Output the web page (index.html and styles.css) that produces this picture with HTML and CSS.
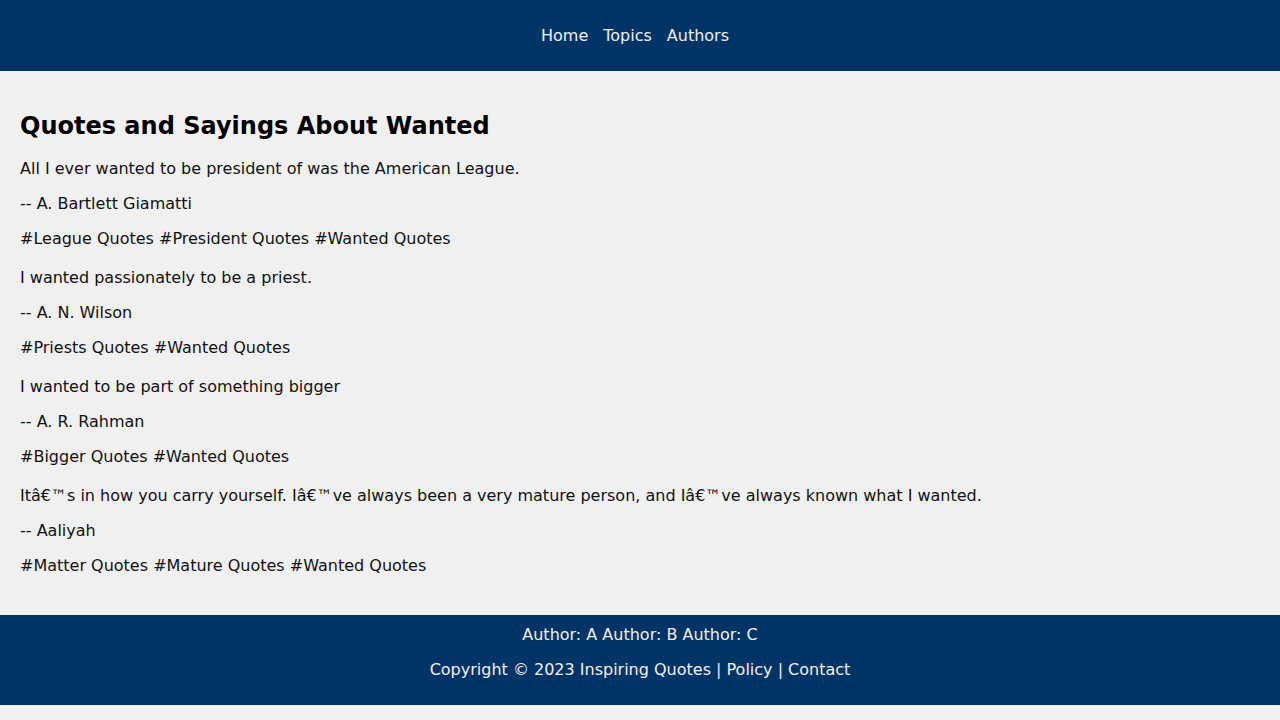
FILE: index.html
```html
<!DOCTYPE html>
<html lang="en">
<head>
<meta charset="utf-8">
<title>Quotes and Sayings About Wanted</title>
<link rel="stylesheet" href="styles.css">
</head>
<body>
<header class="site-header">
  <nav class="nav">
    <a href="#">Home</a>
    <a href="#">Topics</a>
    <a href="#">Authors</a>
  </nav>
</header>
<main class="content">
  <h1 class="title">Quotes and Sayings About Wanted</h1>
  <div class="quote">
    <p>All I ever wanted to be president of was the American League.</p>
    <p>-- A. Bartlett Giamatti</p>
    <p>#League Quotes #President Quotes #Wanted Quotes</p>
  </div>
  <div class="quote">
    <p>I wanted passionately to be a priest.</p>
    <p>-- A. N. Wilson</p>
    <p>#Priests Quotes #Wanted Quotes</p>
  </div>
  <div class="quote">
    <p>I wanted to be part of something bigger</p>
    <p>-- A. R. Rahman</p>
    <p>#Bigger Quotes #Wanted Quotes</p>
  </div>
  <div class="quote">
    <p>Itâ€™s in how you carry yourself. Iâ€™ve always been a very mature person, and Iâ€™ve always known what I wanted.</p>
    <p>-- Aaliyah</p>
    <p>#Matter Quotes #Mature Quotes #Wanted Quotes</p>
  </div>
</main>
<footer class="site-footer">
  <div class="authors">Author: A Author: B Author: C</div>
  <p class="copy">Copyright © 2023 Inspiring Quotes | Policy | Contact</p>
</footer>
</body>
</html>
```
FILE: styles.css
```css
html {
  background: #f0f0f0;
}
body {
  margin: 0;
  font-family: "DejaVu Sans", sans-serif;
  font-size: 16px;
  color: #111;
  background: #f0f0f0;
}
.site-header {
  background: #003366;
  height: 71px;
  display: flex;
  align-items: center;
  justify-content: center;
}
.nav {
  display: flex;
  gap: 15px;
  padding-right: 10px;
}
.nav a {
  color: #f0f0f0;
  text-decoration: none;
}
.content {
  padding: 20px;
}
.title {
  font-size: 24px;
  margin: 21px 0 19px;
  color: #000;
}
.quote {
  margin-bottom: 20px;
}
.quote p {
  margin: 16px 0;
}
.site-footer {
  background: #003366;
  color: #f0f0f0;
  text-align: center;
  padding: 10px;
}
.copy {
  margin: 16px 0;
}
```
